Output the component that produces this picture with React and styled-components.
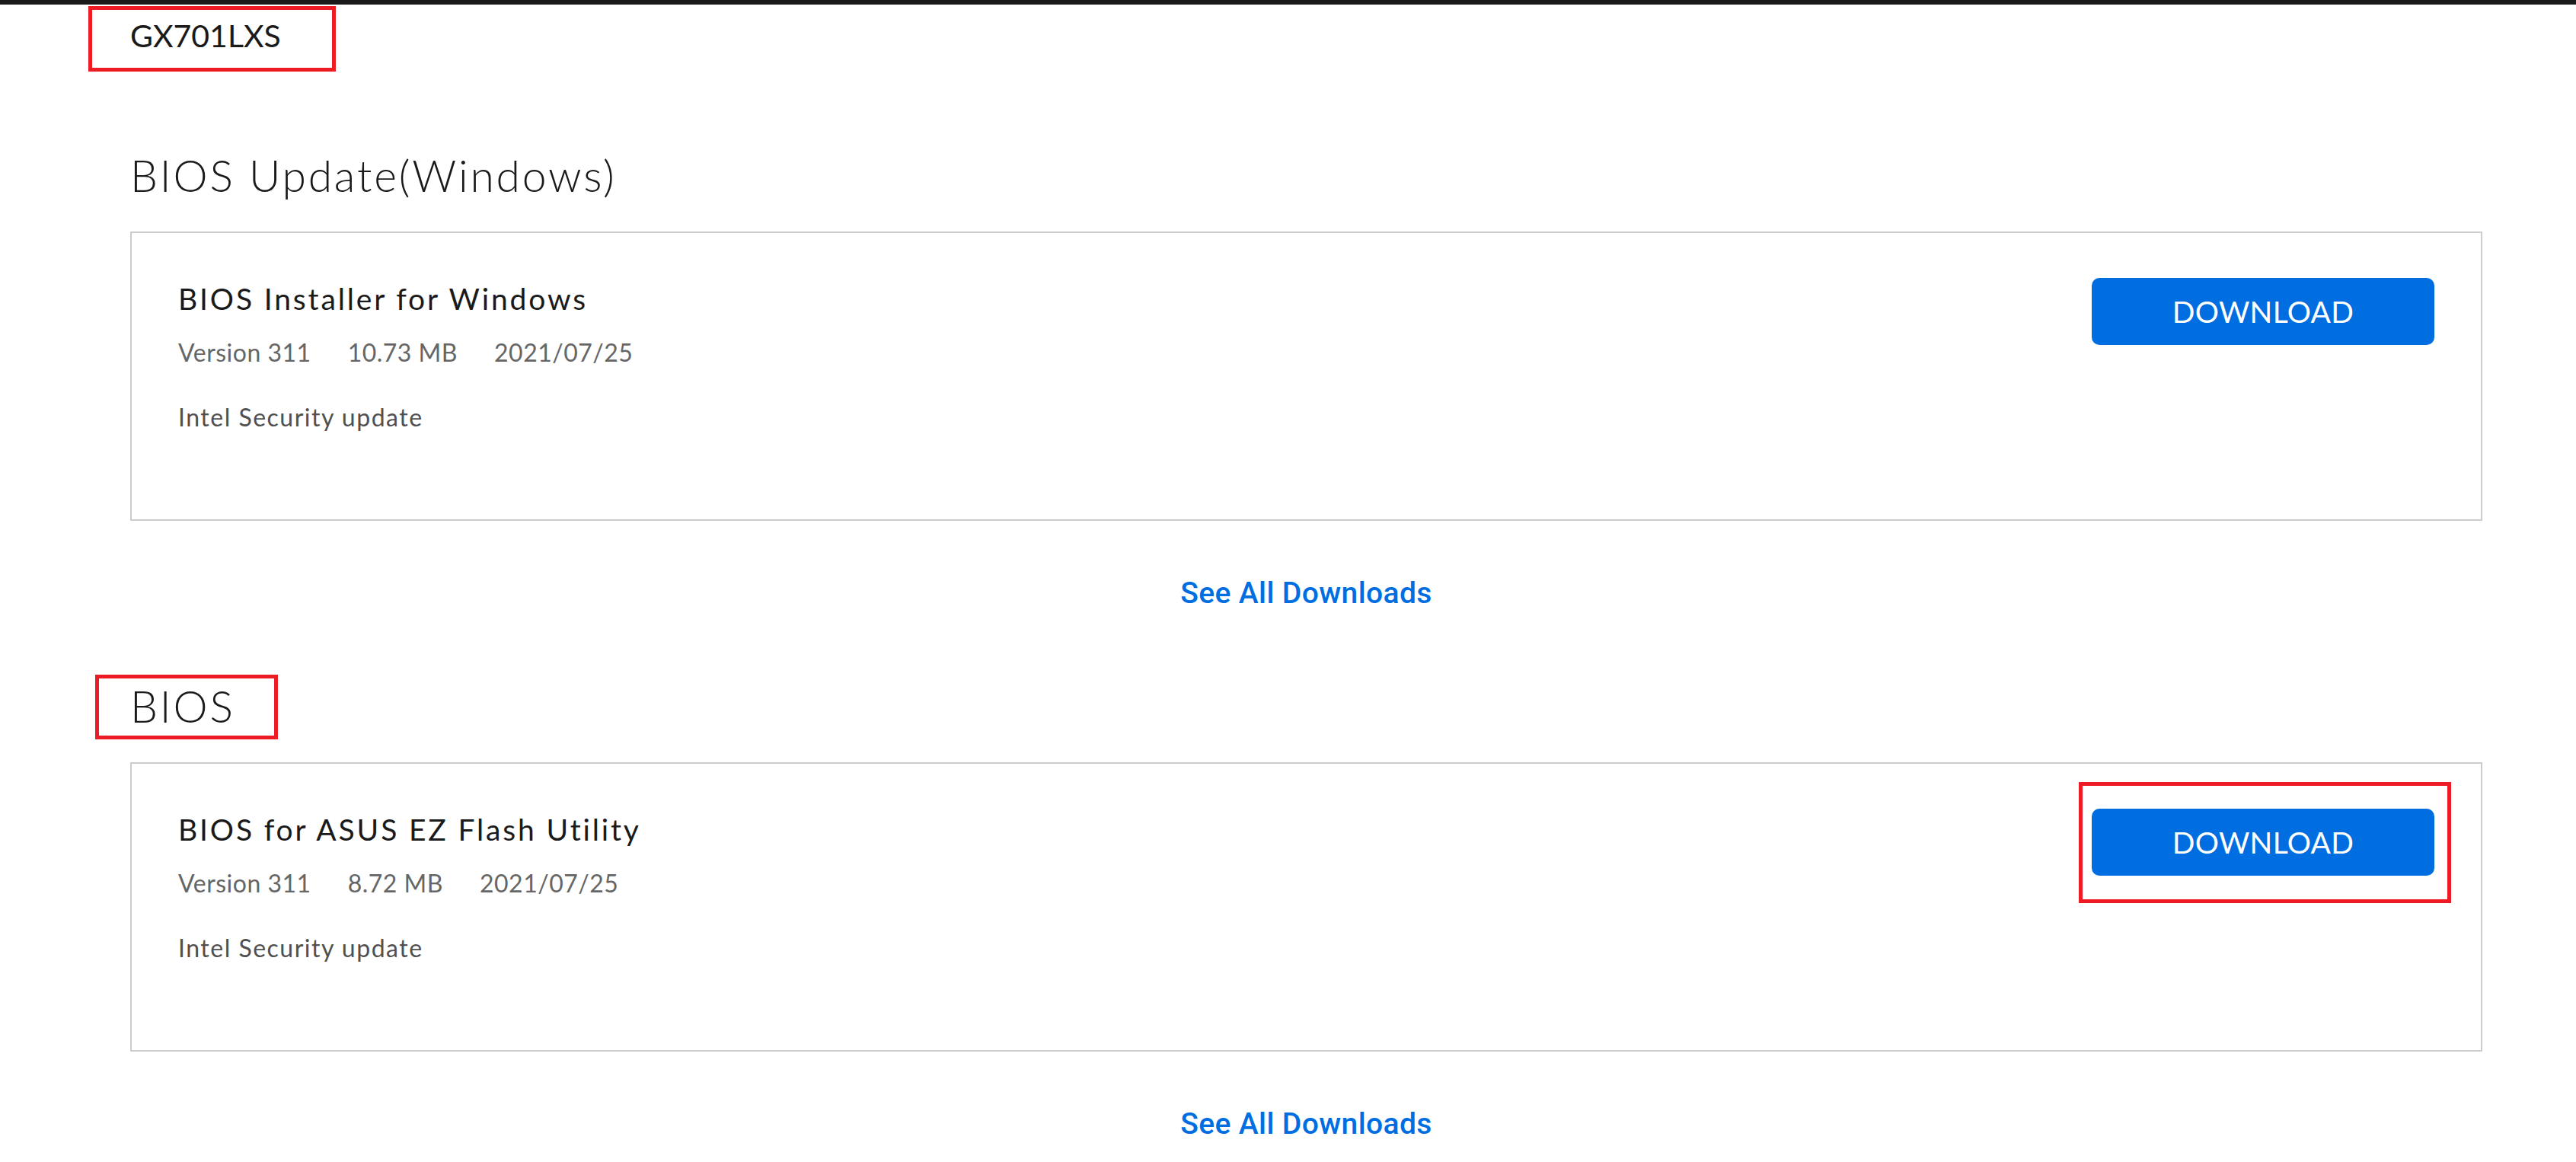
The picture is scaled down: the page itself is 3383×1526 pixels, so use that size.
import React from "react";
import styled, { createGlobalStyle } from "styled-components";

const GlobalStyle = createGlobalStyle`
  body {
    margin: 0;
    background: #ffffff;
    font-family: "Lato", "Open Sans", sans-serif;
    color: #1a1a1a;
  }
`;

const sections = [
  {
    title: "BIOS Update(Windows)",
    markTitle: false,
    file: {
      name: "BIOS Installer for Windows",
      version: "Version 311",
      size: "10.73 MB",
      date: "2021/07/25",
      note: "Intel Security update",
    },
    markButton: false,
  },
  {
    title: "BIOS",
    markTitle: true,
    file: {
      name: "BIOS for ASUS EZ Flash Utility",
      version: "Version 311",
      size: "8.72 MB",
      date: "2021/07/25",
      note: "Intel Security update",
    },
    markButton: true,
  },
];

const App = () => {
  return (
    <>
      <GlobalStyle />
      <TopBar />
      <Page>
        <ModelRow>
          <Marked top={18} left={55} right={72} bottom={27}>
            <ModelName>GX701LXS</ModelName>
          </Marked>
        </ModelRow>
        {sections.map((section) => (
          <Section key={section.title}>
            <SectionTitle>
              {section.markTitle ? (
                <Marked top={13} left={46} right={56} bottom={15}>
                  {section.title}
                </Marked>
              ) : (
                section.title
              )}
            </SectionTitle>
            <Card>
              <FileInfo>
                <FileName>{section.file.name}</FileName>
                <Meta>
                  <span>{section.file.version}</span>
                  <span>{section.file.size}</span>
                  <span>{section.file.date}</span>
                </Meta>
                <Note>{section.file.note}</Note>
              </FileInfo>
              {section.markButton ? (
                <Marked top={35} left={17} right={22} bottom={36}>
                  <DownloadButton>DOWNLOAD</DownloadButton>
                </Marked>
              ) : (
                <DownloadButton>DOWNLOAD</DownloadButton>
              )}
            </Card>
            <SeeAllRow>
              <SeeAll href="#">See All Downloads</SeeAll>
            </SeeAllRow>
          </Section>
        ))}
      </Page>
    </>
  );
};

const TopBar = styled.div`
  height: 6px;
  background: #1a1a1a;
`;

const Page = styled.main`
  padding: 0 123px 0 171px;
`;

const ModelRow = styled.div`
  padding-top: 20px;
`;

// red annotation frame drawn over a part of the page
const Marked = styled.span`
  position: relative;
  display: inline-block;
  &::after {
    content: "";
    position: absolute;
    top: -${(p) => p.top}px;
    left: -${(p) => p.left}px;
    right: -${(p) => p.right}px;
    bottom: -${(p) => p.bottom}px;
    border: 5px solid #ed1c24;
    pointer-events: none;
  }
`;

const ModelName = styled.span`
  display: block;
  font-size: 41px;
  line-height: 41px;
  font-weight: 400;
  color: #1a1a1a;
`;

const Section = styled.section`
  display: flex;
  flex-direction: column;
  padding-top: 135px;
  & + & {
    padding-top: 100px;
  }
`;

const SectionTitle = styled.h2`
  margin: 0 0 45px;
  font-size: 57px;
  line-height: 57px;
  font-weight: 300;
  letter-spacing: 2.8px;
  color: #1a1a1a;
`;

const Card = styled.div`
  box-sizing: border-box;
  height: 380px;
  border: 2px solid #cccccc;
  padding: 59px 61px 0 61px;
  display: flex;
  justify-content: space-between;
  align-items: flex-start;
`;

const FileInfo = styled.div`
  display: flex;
  flex-direction: column;
  padding-top: 8px;
`;

const FileName = styled.div`
  font-size: 39px;
  line-height: 39px;
  letter-spacing: 2.85px;
  color: #1a1a1a;
`;

const Meta = styled.div`
  display: flex;
  gap: 48px;
  margin-top: 35px;
  font-size: 32px;
  line-height: 32px;
  letter-spacing: 0.5px;
  color: #666666;
`;

const Note = styled.div`
  margin-top: 53px;
  font-size: 32px;
  line-height: 32px;
  letter-spacing: 1.5px;
  color: #505050;
`;

const DownloadButton = styled.button`
  display: flex;
  align-items: center;
  justify-content: center;
  width: 450px;
  height: 88px;
  padding: 0;
  border: none;
  border-radius: 10px;
  background: #006ee0;
  color: #ffffff;
  font-family: "Lato", "Open Sans", sans-serif;
  font-size: 39px;
  font-weight: 400;
  letter-spacing: 0.3px;
  cursor: pointer;
`;

const SeeAllRow = styled.div`
  display: flex;
  justify-content: center;
  padding-top: 76px;
`;

const SeeAll = styled.a`
  font-family: "Roboto", "Inter", sans-serif;
  font-size: 39px;
  line-height: 39px;
  font-weight: 500;
  letter-spacing: 0.4px;
  color: #006ee0;
  text-decoration: none;
`;

export default App;
